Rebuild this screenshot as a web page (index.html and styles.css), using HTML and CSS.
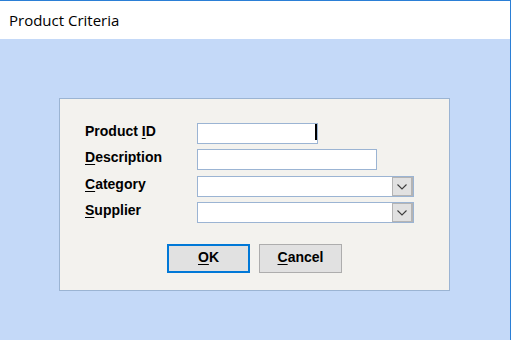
FILE: index.html
```html
<!DOCTYPE html>
<html>
<head>
<meta charset="utf-8">
<link rel="stylesheet" href="styles.css">
</head>
<body>
<div class="window">
  <div class="titlebar">Product Criteria</div>
  <div class="client">
    <div class="panel">
      <div class="form">
        <div class="row">
          <span class="label">Product <u>I</u>D</span>
          <div class="field w-id"><span class="caret"></span></div>
        </div>
        <div class="row">
          <span class="label"><u>D</u>escription</span>
          <div class="field w-desc"></div>
        </div>
        <div class="row gap6">
          <span class="label"><u>C</u>ategory</span>
          <div class="field combo">
            <span class="combo-btn"><svg width="10" height="6" viewBox="0 0 10 6"><path d="M0.5 0.5 L5 5 L9.5 0.5" fill="none" stroke="#3c3c3c" stroke-width="1.1"/></svg></span>
          </div>
        </div>
        <div class="row">
          <span class="label"><u>S</u>upplier</span>
          <div class="field combo">
            <span class="combo-btn"><svg width="10" height="6" viewBox="0 0 10 6"><path d="M0.5 0.5 L5 5 L9.5 0.5" fill="none" stroke="#3c3c3c" stroke-width="1.1"/></svg></span>
          </div>
        </div>
      </div>
      <div class="buttons">
        <div class="btn default"><span><u>O</u>K</span></div>
        <div class="btn"><span><u>C</u>ancel</span></div>
      </div>
    </div>
  </div>
</div>
</body>
</html>
```

FILE: styles.css
```css
html, body {
  margin: 0;
  padding: 0;
  background: #ffffff;
}
.window {
  width: 510px;
  height: 339px;
  border-top: 1px solid #2b7fd6;
  border-right: 1px solid #2b7fd6;
  display: flex;
  flex-direction: column;
}
.titlebar {
  height: 38px;
  flex: none;
  background: #ffffff;
  display: flex;
  align-items: center;
  padding-left: 9px;
  font-family: "Open Sans", "Noto Sans", sans-serif;
  font-size: 15px;
  color: #000;
}
.client {
  flex: 1;
  background: #c4d9f8;
  padding: 59px 0 0 59px;
}
.panel {
  box-sizing: border-box;
  width: 391px;
  height: 193px;
  background: #f3f2ee;
  border: 1px solid #9bb4d3;
  padding: 24px 0 0 25px;
  font-family: "Liberation Sans", Arial, sans-serif;
  font-weight: bold;
  font-size: 14px;
  color: #000;
}
.form {
  display: flex;
  flex-direction: column;
  gap: 5px;
}
.row {
  display: flex;
  align-items: flex-start;
  height: 21px;
}
.row.gap6 {
  margin-top: 1px;
}
.label {
  width: 112px;
  line-height: 17px;
  white-space: nowrap;
}
u {
  text-decoration-thickness: 1px;
  text-underline-offset: 2px;
}
.field {
  box-sizing: border-box;
  height: 21px;
  background: #ffffff;
  border: 1px solid #9bb4d3;
  position: relative;
}
.w-id { width: 121px; }
.w-desc { width: 180px; }
.combo {
  width: 217px;
  display: flex;
  justify-content: flex-end;
}
.caret {
  position: absolute;
  right: 0;
  top: 0;
  width: 2px;
  height: 16px;
  background: #000;
}
.combo-btn {
  box-sizing: border-box;
  width: 21px;
  height: 19px;
  background: #e1e1e1;
  border: 1px solid #b4b4b4;
  border-right-width: 2px;
  display: flex;
  align-items: center;
  justify-content: center;
}
.buttons {
  display: flex;
  justify-content: center;
  gap: 9px;
  margin-top: 21px;
  padding-right: 25px;
}
.btn {
  box-sizing: border-box;
  width: 83px;
  height: 29px;
  background: #e1e1e1;
  border: 1px solid #adadad;
  display: flex;
  align-items: center;
  justify-content: center;
  padding-bottom: 3px;
  line-height: 16px;
}
.btn.default {
  border: 2px solid #0078d7;
}
```
